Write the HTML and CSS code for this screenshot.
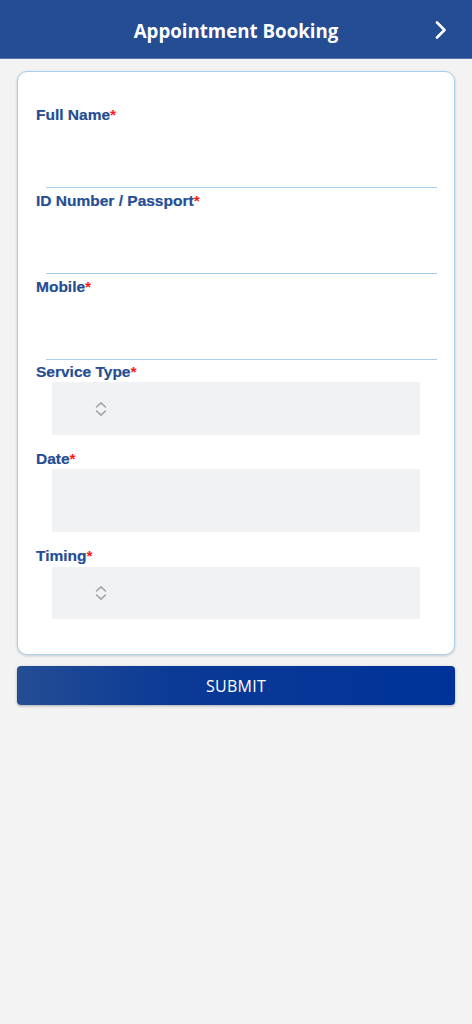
FILE: index.html
```html
<!DOCTYPE html>
<html lang="en">
<head>
<meta charset="utf-8">
<title>Appointment Booking</title>
<link rel="stylesheet" href="styles.css">
</head>
<body>
<header class="topbar">
  <h1 class="title">Appointment Booking</h1>
  <svg class="next" width="12" height="18" viewBox="0 0 12 18" aria-hidden="true">
    <path d="M2 1.5 L9.5 9 L2 16.5" fill="none" stroke="#fff" stroke-width="2.6" stroke-linecap="round" stroke-linejoin="round"/>
  </svg>
</header>
<main class="content">
  <form class="card">
    <div class="field text-field">
      <label class="label">Full Name<span class="req">*</span></label>
      <div class="line-input"></div>
    </div>
    <div class="field text-field">
      <label class="label">ID Number / Passport<span class="req">*</span></label>
      <div class="line-input"></div>
    </div>
    <div class="field text-field">
      <label class="label">Mobile<span class="req">*</span></label>
      <div class="line-input"></div>
    </div>
    <div class="field box-field">
      <label class="label">Service Type<span class="req">*</span></label>
      <div class="box select">
        <svg class="updown" width="12" height="16" viewBox="0 0 12 16" aria-hidden="true">
          <path d="M1.5 6 L6 1.8 L10.5 6" fill="none" stroke="#a3a3a3" stroke-width="1.6" stroke-linecap="round" stroke-linejoin="round"/>
          <path d="M1.5 10 L6 14.2 L10.5 10" fill="none" stroke="#a3a3a3" stroke-width="1.6" stroke-linecap="round" stroke-linejoin="round"/>
        </svg>
      </div>
    </div>
    <div class="field box-field">
      <label class="label">Date<span class="req">*</span></label>
      <div class="box date"></div>
    </div>
    <div class="field box-field">
      <label class="label">Timing<span class="req">*</span></label>
      <div class="box select timing">
        <svg class="updown" width="12" height="16" viewBox="0 0 12 16" aria-hidden="true">
          <path d="M1.5 6 L6 1.8 L10.5 6" fill="none" stroke="#a3a3a3" stroke-width="1.6" stroke-linecap="round" stroke-linejoin="round"/>
          <path d="M1.5 10 L6 14.2 L10.5 10" fill="none" stroke="#a3a3a3" stroke-width="1.6" stroke-linecap="round" stroke-linejoin="round"/>
        </svg>
      </div>
    </div>
  </form>
  <button class="submit" type="button">SUBMIT</button>
</main>
</body>
</html>
```

FILE: styles.css
```css
* {
  box-sizing: border-box;
}

html, body {
  margin: 0;
  padding: 0;
}

body {
  background: #f3f3f3;
  font-family: "Liberation Sans", Arial, sans-serif;
  min-height: 1024px;
}

.topbar {
  height: 59px;
  background: #244d94;
  border-bottom: 1px solid #5877ae;
  display: flex;
  align-items: center;
  justify-content: center;
  position: relative;
}

.title {
  margin: 0;
  color: #fff;
  font-family: "Open Sans", sans-serif;
  font-weight: 700;
  font-size: 18.7px;
  line-height: 1;
  padding-top: 4px;
}

.next {
  position: absolute;
  right: 25px;
  top: 21px;
}

.content {
  padding: 12px 17px 0 17px;
}

.card {
  background: #fff;
  border: 1px solid #a9d0ec;
  border-radius: 10px;
  box-shadow: 0 1px 3px rgba(0, 0, 0, 0.18);
  padding: 33px 18px 35px 18px;
  display: flex;
  flex-direction: column;
}

.label {
  display: block;
  font-family: "Liberation Sans", Arial, sans-serif;
  font-weight: 700;
  font-size: 15.5px;
  line-height: 19px;
  color: #244d94;
  -webkit-text-stroke: 0.2px #244d94;
}

.req {
  color: #ff1a1a;
  -webkit-text-stroke: 0;
}

.text-field + .text-field {
  margin-top: 3px;
}

.text-field + .box-field {
  margin-top: 2px;
}

.line-input {
  height: 64px;
  margin-left: 10px;
  margin-right: -1px;
  border-bottom: 1.5px solid #a6cfee;
}

.box-field + .box-field {
  margin-top: 14px;
}

.box {
  background: #f1f2f4;
  margin: 1px 16px 0 16px;
  height: 53px;
  display: flex;
  align-items: center;
}

.box.date {
  height: 63px;
}

.box.timing {
  margin-top: 2px;
  height: 52px;
}

.updown {
  margin-left: 43px;
}

.submit {
  display: block;
  width: 100%;
  height: 39px;
  margin-top: 11px;
  border: none;
  border-radius: 4px;
  background: linear-gradient(90deg, #244d94 0%, #0b3a96 35%, #003399 100%);
  box-shadow: 0 1px 3px rgba(0, 0, 0, 0.3);
  color: #fff;
  font-family: "Open Sans", sans-serif;
  font-size: 16px;
  font-weight: 400;
  letter-spacing: 0.3px;
  padding: 0;
}
```
